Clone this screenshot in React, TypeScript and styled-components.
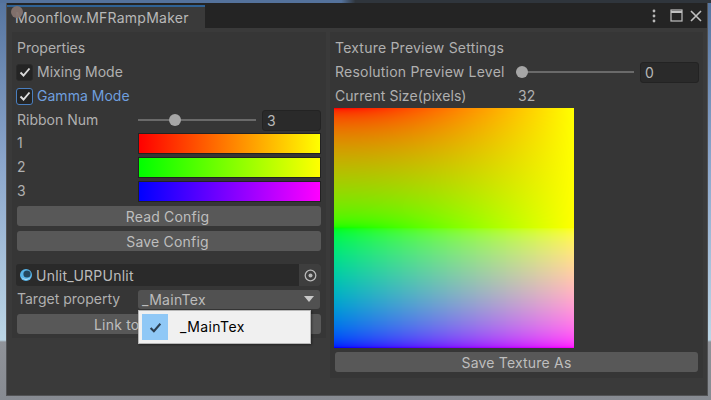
import React, { useEffect, useRef } from 'react';
import styled, { createGlobalStyle } from 'styled-components';

const GlobalStyle = createGlobalStyle`
  html, body {
    margin: 0;
    padding: 0;
    width: 711px;
    height: 400px;
    overflow: hidden;
    background: #8a8e94;
  }
  * {
    box-sizing: border-box;
  }
`;

const Desktop = styled.div`
  width: 711px;
  height: 400px;
  padding: 3px 3px 4px 6px;
  font-family: Inter, 'Liberation Sans', sans-serif;
  font-size: 14px;
  color: #b0b0b0;
  filter: blur(0.7px);
  background:
    linear-gradient(90deg, #54729c 0, #54729c 48%, #2f353c 50%, #2f353c 100%) top / 100% 3px no-repeat,
    linear-gradient(180deg, #55749f 0, #8ba6cc 40%, #bcd6e6 85%, #8f9298 85.5%, #878b92 100%);
`;

const Window = styled.div`
  height: 100%;
  display: flex;
  flex-direction: column;
  background: #3a3a3a;
  border: 1px solid #525355;
  border-top: 0;
`;

const TabBar = styled.div`
  height: 25px;
  flex: none;
  padding-top: 2px;
  display: flex;
  align-items: stretch;
  justify-content: space-between;
  background: #242424;
`;

const Tab = styled.div`
  position: relative;
  width: 198px;
  padding: 1px 0 0 8px;
  background: #3a3a3a;
  border-top: 2px solid #2f6295;
  color: #b8b8b8;
  letter-spacing: 0.25px;
  line-height: 20px;
  white-space: nowrap;
`;

const CursorDot = styled.span`
  position: absolute;
  left: 4px;
  top: -1px;
  width: 12px;
  height: 12px;
  border-radius: 50%;
  background: #84736e;
  opacity: 0.95;
`;

const WindowActions = styled.div`
  display: flex;
  align-items: center;
  gap: 7px;
  padding: 0 5px 2px 0;
`;

const Kebab = styled.svg`
  margin-right: 7px;
`;

const Body = styled.div`
  flex: 1;
  display: flex;
  gap: 4px;
  padding: 4px 4px 0 5px;
  align-items: flex-start;
`;

const Panel = styled.div<{ $width: number; $height: number; $spacing?: number }>`
  flex: none;
  width: ${(p) => p.$width}px;
  height: ${(p) => p.$height}px;
  padding: 4px 5px 0;
  display: flex;
  flex-direction: column;
  letter-spacing: ${(p) => p.$spacing ?? 0}px;
  background: #363636;
`;

const Row = styled.div<{ $height?: number; $top?: number }>`
  height: ${(p) => p.$height ?? 24}px;
  margin-top: ${(p) => p.$top ?? 0}px;
  flex: none;
  display: flex;
  align-items: center;
  white-space: nowrap;
`;

const Label = styled.span<{ $width?: number; $spacing?: number }>`
  flex: none;
  width: ${(p) => (p.$width ? `${p.$width}px` : 'auto')};
  margin-bottom: 2px;
  ${(p) => (p.$spacing !== undefined ? `letter-spacing: ${p.$spacing}px;` : '')}
`;

const CheckBox = styled.span<{ $focused?: boolean }>`
  flex: none;
  width: 17px;
  height: 17px;
  margin: 0 4px 0 -1px;
  display: flex;
  align-items: center;
  justify-content: center;
  border-radius: 3px;
  background: #242424;
  border: 1px solid ${(p) => (p.$focused ? '#4a7fc0' : '#2a2a2a')};
`;

const CheckLabel = styled.span<{ $focused?: boolean }>`
  margin-bottom: 2px;
  letter-spacing: 0.02px;
  color: ${(p) => (p.$focused ? '#6f9fdf' : '#b0b0b0')};
`;

const Slider = styled.div<{ $width: number }>`
  position: relative;
  flex: none;
  width: ${(p) => p.$width}px;
  height: 2px;
  margin-right: 6px;
  background: #6a6a6a;
`;

const Thumb = styled.span`
  position: absolute;
  top: -5px;
  width: 12px;
  height: 12px;
  margin-left: -6px;
  border-radius: 50%;
  background: #a6a6a6;
`;

const NumberField = styled.div`
  flex: none;
  width: 59px;
  height: 21px;
  padding: 0 4px;
  display: flex;
  align-items: center;
  border-radius: 3px;
  background: #2a2a2a;
  border: 1px solid #232323;
  color: #b8b8b8;
`;

const ColorField = styled.div<{ $from: string; $to: string }>`
  flex: none;
  width: 183px;
  height: 21px;
  border: 1px solid #222;
  background: linear-gradient(90deg, ${(p) => p.$from}, ${(p) => p.$to});
`;

const Button = styled.div<{ $top?: number; $indent?: number; $nudge?: number }>`
  flex: none;
  height: 20px;
  margin-top: ${(p) => p.$top ?? 0}px;
  padding-left: ${(p) => p.$indent ?? 0}px;
  padding-right: ${(p) => p.$nudge ?? 0}px;
  display: flex;
  align-items: center;
  justify-content: ${(p) => (p.$indent ? 'flex-start' : 'center')};
  border-radius: 3px;
  background: #585858;
  color: #bebebe;
  letter-spacing: 0.2px;
`;

const ObjectField = styled.div`
  flex: none;
  height: 22px;
  margin: 13px 0 0 -1px;
  display: flex;
  align-items: center;
  padding-left: 3px;
  border-radius: 3px;
  overflow: hidden;
  background: #2a2a2a;
  color: #bcbcbc;
`;

const ObjectName = styled.span`
  flex: 1;
  margin-left: 3px;
  letter-spacing: 0.25px;
`;

const ObjectPicker = styled.span`
  flex: none;
  width: 22px;
  height: 100%;
  display: flex;
  align-items: center;
  justify-content: center;
  background: #3e3e3e;
`;

const PropertyBlock = styled.div`
  position: relative;
  display: flex;
  flex-direction: column;
`;

const SelectBox = styled.div`
  flex: none;
  width: 182px;
  height: 19px;
  padding: 0 6px 1px 4px;
  display: flex;
  align-items: center;
  justify-content: space-between;
  border-radius: 3px;
  background: #515151;
  color: #bcbcbc;
  letter-spacing: 0.3px;
`;

const Arrow = styled.span`
  width: 0;
  height: 0;
  border-left: 5px solid transparent;
  border-right: 5px solid transparent;
  border-top: 6px solid #c8c8c8;
`;

const Popup = styled.div`
  position: absolute;
  left: 121px;
  top: 24px;
  width: 173px;
  height: 34px;
  padding: 3px;
  display: flex;
  align-items: stretch;
  background: #f0f0f0;
  border: 1px solid #b8b8b8;
  box-shadow: 1px 1px 2px rgba(0, 0, 0, 0.4);
  color: #000;
  letter-spacing: 0.4px;
`;

const PopupCheck = styled.span`
  flex: none;
  width: 26px;
  display: flex;
  align-items: center;
  justify-content: center;
  background: #90c8f6;
`;

const PopupText = styled.span`
  margin: 0 0 2px 12px;
  align-self: center;
`;

const RampCanvas = styled.canvas`
  flex: none;
  display: block;
  width: 240px;
  height: 240px;
  margin-left: -1px;
`;

type Rgb = [number, number, number];

// rows are plain lerps, only the mix between rows goes through linear space
const lerp = (a: Rgb, b: Rgb, t: number): Rgb =>
  [0, 1, 2].map((i) => a[i] * (1 - t) + b[i] * t) as Rgb;
const gammaMix = (a: Rgb, b: Rgb, t: number): Rgb =>
  [0, 1, 2].map((i) =>
    Math.pow(Math.pow(a[i], 2.2) * (1 - t) + Math.pow(b[i], 2.2) * t, 1 / 2.2),
  ) as Rgb;

const rampRows: [Rgb, Rgb][] = [
  [[1, 0, 0], [1, 1, 0]],
  [[0, 1, 0], [1, 1, 0]],
  [[0, 0, 1], [1, 0, 1]],
];

const RampPreview = () => {
  const ref = useRef<HTMLCanvasElement>(null);

  useEffect(() => {
    const ctx = ref.current?.getContext('2d');
    if (!ctx) return;
    const size = 240;
    const img = ctx.createImageData(size, size);
    for (let y = 0; y < size; y++) {
      const v = (y / (size - 1)) * (rampRows.length - 1);
      const band = Math.min(Math.floor(v), rampRows.length - 2);
      for (let x = 0; x < size; x++) {
        const u = x / (size - 1);
        const top = lerp(rampRows[band][0], rampRows[band][1], u);
        const bot = lerp(rampRows[band + 1][0], rampRows[band + 1][1], u);
        const c = gammaMix(top, bot, v - band);
        const i = (y * size + x) * 4;
        img.data[i] = c[0] * 255;
        img.data[i + 1] = c[1] * 255;
        img.data[i + 2] = c[2] * 255;
        img.data[i + 3] = 255;
      }
    }
    ctx.putImageData(img, 0, 0);
  }, []);

  return <RampCanvas ref={ref} width={240} height={240} />;
};

const Slide = ({ width, pos }: { width: number; pos: number }) => (
  <Slider $width={width}>
    <Thumb style={{ left: `${pos}%` }} />
  </Slider>
);

const Tick = ({ color, size = 12 }: { color: string; size?: number }) => (
  <svg width={size} height={size} viewBox="0 0 12 12" fill="none">
    <path d="M1.5 6.5 L4.5 9.5 L10.5 2.5" stroke={color} strokeWidth="1.9" />
  </svg>
);

const App = () => {
  const ribbons = [
    { id: '1', from: '#ff0000', to: '#ffff00' },
    { id: '2', from: '#00ff00', to: '#ffff00' },
    { id: '3', from: '#0000ff', to: '#ff00ff' },
  ];

  return (
    <Desktop>
      <GlobalStyle />
      <Window>
        <TabBar>
          <Tab>
            <CursorDot />
            Moonflow.MFRampMaker
          </Tab>
          <WindowActions>
            <Kebab width="4" height="14" viewBox="0 0 4 14" fill="#b8b8b8">
              <circle cx="2" cy="2" r="1.4" />
              <circle cx="2" cy="7" r="1.4" />
              <circle cx="2" cy="12" r="1.4" />
            </Kebab>
            <svg width="13" height="13" viewBox="0 0 13 13" fill="none" stroke="#c0c0c0">
              <rect x="1" y="1" width="11" height="11" strokeWidth="1.2" />
              <path d="M1 3 H12" strokeWidth="2" />
            </svg>
            <svg width="12" height="12" viewBox="0 0 12 12" fill="none" stroke="#c0c0c0" strokeWidth="1.6">
              <path d="M1 1 L11 11 M11 1 L1 11" />
            </svg>
          </WindowActions>
        </TabBar>
        <Body>
          <Panel $width={314} $height={306}>
            <Row>
              <Label>Properties</Label>
            </Row>
            <Row>
              <CheckBox>
                <Tick color="#d8d8d8" />
              </CheckBox>
              <CheckLabel>Mixing Mode</CheckLabel>
            </Row>
            <Row>
              <CheckBox $focused>
                <Tick color="#e0e0e0" />
              </CheckBox>
              <CheckLabel $focused>Gamma Mode</CheckLabel>
            </Row>
            <Row>
              <Label $width={121}>Ribbon Num</Label>
              <Slide width={118} pos={31} />
              <NumberField>3</NumberField>
            </Row>
            {ribbons.map((r, i) => (
              <Row key={r.id} $top={i === 0 ? -1 : 0}>
                <Label $width={121}>{r.id}</Label>
                <ColorField $from={r.from} $to={r.to} />
              </Row>
            ))}
            <Button $top={3} $nudge={3}>Read Config</Button>
            <Button $top={5} $nudge={3}>Save Config</Button>
            <ObjectField>
              <svg width="14" height="14" viewBox="0 0 14 14">
                <circle cx="7" cy="7" r="6" fill="#58b4e8" />
                <circle cx="8" cy="6" r="3.6" fill="#24475f" />
                <path d="M2 9 A6 6 0 0 0 12 9 A7 7 0 0 1 2 9 Z" fill="#d6eefb" />
              </svg>
              <ObjectName>Unlit_URPUnlit</ObjectName>
              <ObjectPicker>
                <svg width="13" height="13" viewBox="0 0 13 13" fill="none">
                  <circle cx="6.5" cy="6.5" r="5.3" stroke="#b8b8b8" strokeWidth="1.3" />
                  <circle cx="6.5" cy="6.5" r="2" fill="#b8b8b8" />
                </svg>
              </ObjectPicker>
            </ObjectField>
            <PropertyBlock>
              <Row $height={19} $top={4}>
                <Label $width={121}>Target property</Label>
                <SelectBox>
                  _MainTex
                  <Arrow />
                </SelectBox>
              </Row>
              <Button $top={5} $indent={77}>
                Link to
              </Button>
              <Popup>
                <PopupCheck>
                  <Tick color="#2c3e50" size={13} />
                </PopupCheck>
                <PopupText>_MainTex</PopupText>
              </Popup>
            </PropertyBlock>
          </Panel>
          <Panel $width={373} $height={346} $spacing={0.22}>
            <Row>
              <Label>Texture Preview Settings</Label>
            </Row>
            <Row>
              <Label $width={181}>Resolution Preview Level</Label>
              <Slide width={118} pos={5} />
              <NumberField>0</NumberField>
            </Row>
            <Row>
              <Label $width={183} $spacing={0.05}>Current Size(pixels)</Label>
              <Label>32</Label>
            </Row>
            <RampPreview />
            <Button $top={4}>Save Texture As</Button>
          </Panel>
        </Body>
      </Window>
    </Desktop>
  );
};

export default App;
